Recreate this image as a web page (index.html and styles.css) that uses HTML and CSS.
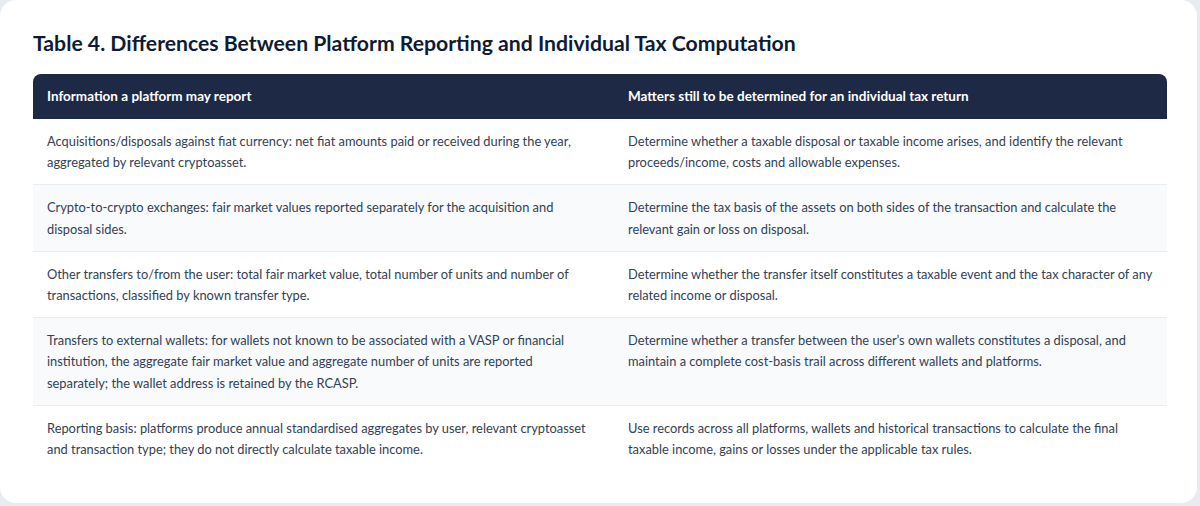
FILE: index.html
```html
<!DOCTYPE html>
<html lang="en">
<head>
<meta charset="utf-8">
<title>Table 4</title>
<link rel="stylesheet" href="styles.css">
</head>
<body>
<div class="card">
  <h2 class="title">Table 4. Differences Between Platform Reporting and Individual Tax Computation</h2>
  <table class="tbl">
    <colgroup><col class="c1"><col class="c2"></colgroup>
    <thead>
      <tr><th>Information a platform may report</th><th>Matters still to be determined for an individual tax return</th></tr>
    </thead>
    <tbody>
      <tr><td>Acquisitions/disposals against fiat currency: net fiat amounts paid or received during the year, aggregated by relevant cryptoasset.</td><td>Determine whether a taxable disposal or taxable income arises, and identify the relevant proceeds/income, costs and allowable expenses.</td></tr>
      <tr><td>Crypto-to-crypto exchanges: fair market values reported separately for the acquisition and disposal sides.</td><td>Determine the tax basis of the assets on both sides of the transaction and calculate the relevant gain or loss on disposal.</td></tr>
      <tr><td>Other transfers to/from the user: total fair market value, total number of units and number of transactions, classified by known transfer type.</td><td>Determine whether the transfer itself constitutes a taxable event and the tax character of any related income or disposal.</td></tr>
      <tr><td>Transfers to external wallets: for wallets not known to be associated with a VASP or financial institution, the aggregate fair market value and aggregate number of units are reported separately; the wallet address is retained by the RCASP.</td><td>Determine whether a transfer between the user’s own wallets constitutes a disposal, and maintain a complete cost-basis trail across different wallets and platforms.</td></tr>
      <tr><td>Reporting basis: platforms produce annual standardised aggregates by user, relevant cryptoasset and transaction type; they do not directly calculate taxable income.</td><td>Use records across all platforms, wallets and historical transactions to calculate the final taxable income, gains or losses under the applicable tax rules.</td></tr>
    </tbody>
  </table>
</div>
</body>
</html>
```
FILE: styles.css
```css
html, body {
  margin: 0;
  padding: 0;
  background: #e8ebef;
}
body {
  font-family: Lato, "Open Sans", sans-serif;
  width: 1200px;
  height: 506px;
  overflow: hidden;
}
.card {
  box-sizing: border-box;
  width: 1197px;
  height: 503px;
  background: #ffffff;
  border-radius: 16px;
  padding: 29px 30px 0 33px;
}
.title {
  margin: 0 0 17px 0;
  font-size: 21.2px;
  line-height: 28px;
  font-weight: 700;
  color: #0f1b33;
}
.tbl {
  width: 1134px;
  border-collapse: separate;
  border-spacing: 0;
  table-layout: fixed;
  font-size: 12.85px;
  line-height: 21.2px;
}
.c1 { width: 581px; }
.c2 { width: 553px; }
.tbl th {
  background: #1e2a45;
  color: #ffffff;
  font-size: 13.5px;
  font-weight: 700;
  text-align: left;
  padding: 12px 14px;
  line-height: 21px;
}
.tbl th:first-child { border-top-left-radius: 8px; }
.tbl th:last-child { border-top-right-radius: 8px; }
.tbl td {
  color: #334155;
  padding: 12px 14px 11px 14px;
  vertical-align: top;
  border-bottom: 1px solid #e9edf2;
}
.tbl td:first-child { padding-right: 20px; }
.tbl tbody tr:nth-child(even) td { background: #f8fafc; }
.tbl tbody tr:last-child td { border-bottom: none; }
```
